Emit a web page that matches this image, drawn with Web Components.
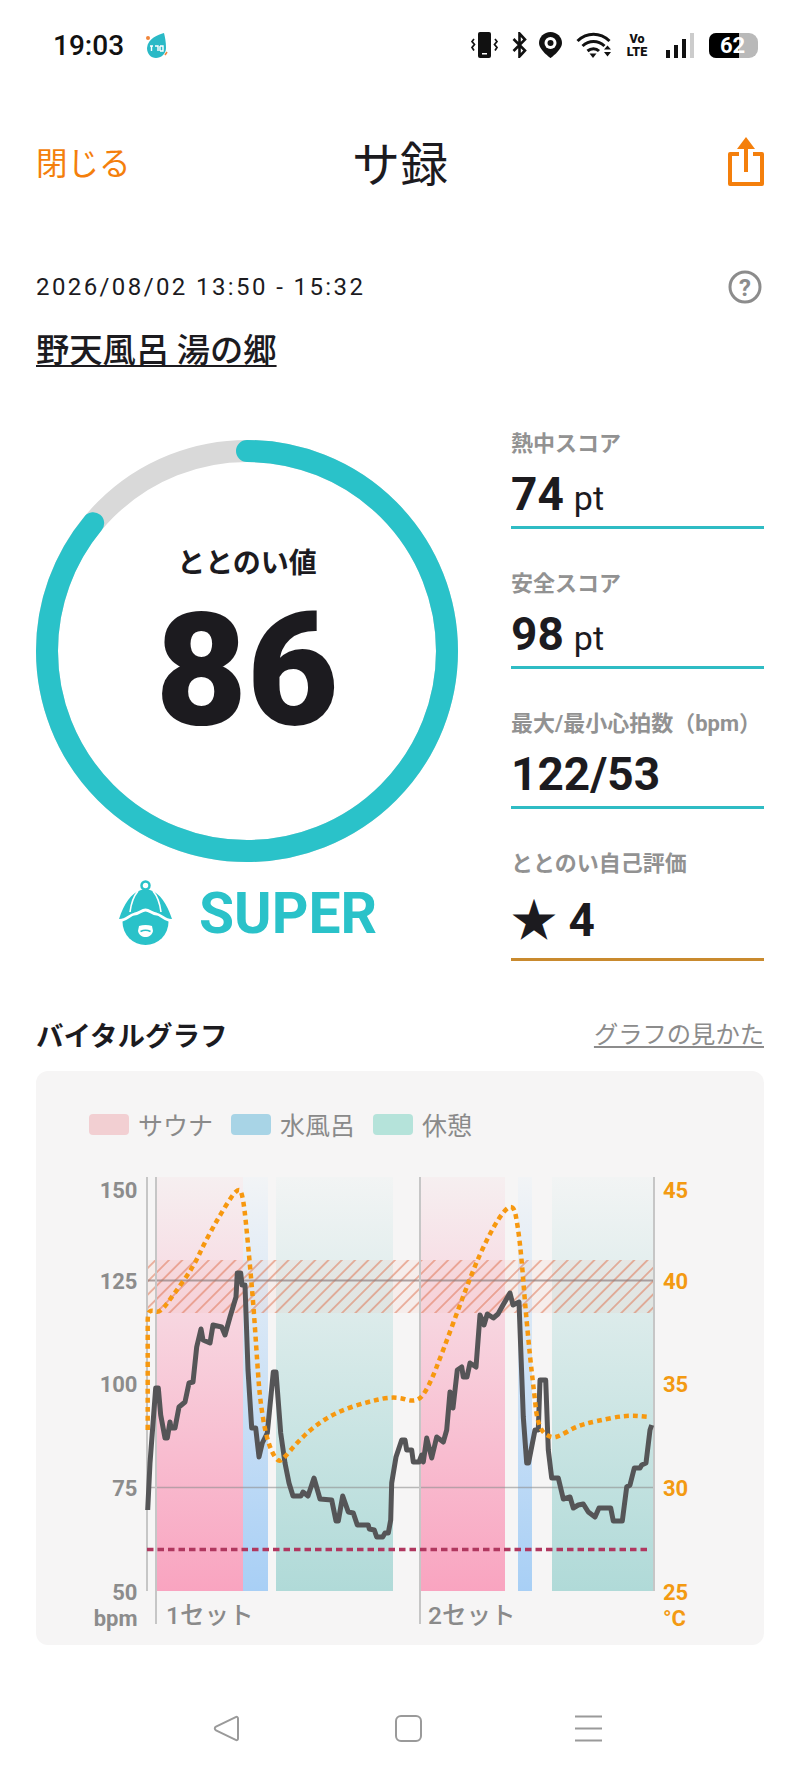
<!DOCTYPE html>
<html lang="ja">
<head>
<meta charset="utf-8">
<title>サ録</title>
<style>
  html, body { margin: 0; background: #fff; }
  body { font-family: Roboto, "Noto Sans CJK JP", sans-serif; color: #1c1b1f; }
</style>
</head>
<body>
<sk-status-bar time="19:03" battery="62"></sk-status-bar>
<sk-page-header close="閉じる" title="サ録"></sk-page-header>
<sk-session-info date="2026/08/02 13:50 - 15:32" venue="野天風呂 湯の郷"></sk-session-info>
<sk-score-panel>
  <sk-score-ring slot="ring" label="ととのい値" score="86" rank="SUPER"></sk-score-ring>
  <sk-stat label="熱中スコア" unit="pt">74</sk-stat>
  <sk-stat label="安全スコア" unit="pt">98</sk-stat>
  <sk-stat label="最大/最小心拍数（bpm）">122/53</sk-stat>
  <sk-stat label="ととのい自己評価" tone="amber">★ 4</sk-stat>
</sk-score-panel>
<sk-section-title link="グラフの見かた">バイタルグラフ</sk-section-title>
<sk-vital-chart></sk-vital-chart>
<sk-nav-bar></sk-nav-bar>

<script>
/* Top system bar: clock, app notification icon, status icons */
class SkStatusBar extends HTMLElement {
  constructor() { super(); this.attachShadow({ mode: 'open' }); }
  connectedCallback() {
    this.shadowRoot.innerHTML = `
      <style>
        :host { display: flex; align-items: center; height: 90px; padding: 0 42px 0 53px; box-sizing: border-box; color: #111; }
        .time { font: 500 28px Roboto, sans-serif; }
        .app { margin-left: 20px; }
        .icons { margin-left: auto; display: flex; align-items: center; }
        svg { display: block; }
        .volte { width: 24px; margin: 0 17px 0 12px; font: 900 12.500px/13px Roboto, sans-serif; text-align: center; }
        .battery { position: relative; width: 49px; height: 25px; margin-left: 15px; border-radius: 7px 9px 9px 7px; overflow: hidden; background: #b9b9b9; }
        .battery i { display: block; width: 30px; height: 100%; background: #000; }
        .battery span { position: absolute; left: 11px; top: 0; font: 700 22px/25px Roboto, sans-serif; color: #fff; }
      </style>
      <span class="time">${this.getAttribute('time')}</span>
      <svg class="app" width="25" height="27" viewBox="0 0 25 27">
        <path d="M20 1C14 3 4 6 3 16c0 6 4 10 9 10s10-4 10-10C22 10 21 5 20 1Z" fill="#2ab9c6"/>
        <circle cx="4" cy="6" r="2" fill="#f0853a"/>
        <path d="M6 14h3M7.500 14v5M11 14h3v5M16 14v5M16 14h3v5h-3" stroke="#fff" stroke-width="1.400" fill="none"/>
        <path d="M21 23l2-3" stroke="#f0853a" stroke-width="1.500"/>
      </svg>
      <div class="icons">
        <svg width="27" height="26" viewBox="0 0 27 26">
          <rect x="7" y="0" width="13" height="26" rx="2" fill="#111"/>
          <rect x="11" y="21" width="5" height="1.500" fill="#fff"/>
          <path d="M3 7l-2 2.500 2.500 3-2.500 3 2 3M24 7l2 2.500-2.500 3 2.500 3-2 3" stroke="#111" stroke-width="1.700" fill="none"/>
        </svg>
        <svg style="margin-left:14px" width="15" height="26" viewBox="0 0 15 26">
          <path d="M1.500 7L13 18.500 7.500 24.500V1.500L13 7.500 1.500 19" stroke="#111" stroke-width="2.600" fill="none"/>
        </svg>
        <svg style="margin-left:12px" width="23" height="26" viewBox="0 0 23 26">
          <path d="M11.500 0C5 0 0 5 0 11c0 7 11.500 15 11.500 15S23 18 23 11C23 5 18 0 11.500 0Z" fill="#111"/>
          <circle cx="11.500" cy="11" r="6" fill="#fff"/><circle cx="11.500" cy="11" r="3" fill="#111"/>
        </svg>
        <svg style="margin-left:14px" width="37" height="26" viewBox="0 0 37 26">
          <path d="M1.500 9C11 0 24 0 33.500 9M6.500 14C13 8 22 8 28.500 14" stroke="#111" stroke-width="3" fill="none"/>
          <path d="M11.500 19C15 16 20 16 23 19" stroke="#111" stroke-width="3" fill="none"/>
          <path d="M13.500 21.500h7L17 26Z" fill="#111"/>
          <path d="M28 17.500h7l-3.500-4ZM28 20h7l-3.500 4.500Z" fill="#111"/>
        </svg>
        <div class="volte">Vo<br>LTE</div>
        <svg width="28" height="25" viewBox="0 0 28 25">
          <rect x="0" y="17" width="4" height="8" fill="#111"/>
          <rect x="8" y="12" width="4" height="13" fill="#111"/>
          <rect x="16" y="6" width="4" height="19" fill="#111"/>
          <rect x="24" y="0" width="4" height="25" fill="#ccc"/>
        </svg>
        <div class="battery"><i></i><span>${this.getAttribute('battery')}</span></div>
      </div>
    `;
  }
}

class SkPageHeader extends HTMLElement {
  constructor() { super(); this.attachShadow({ mode: 'open' }); }
  connectedCallback() {
    this.shadowRoot.innerHTML = `
      <style>
        :host { display: grid; grid-template-columns: 1fr auto 1fr; align-items: center; box-sizing: border-box; height: 146px; padding: 0 36px 5px; }
        .close { font: 400 31.500px "Noto Sans CJK JP", sans-serif; color: #f47f0c; }
        h1 { margin: 0; font: 400 48px "Noto Sans CJK JP", sans-serif; color: #1c1b1f; }
        svg { justify-self: end; display: block; }
      </style>
      <span class="close">${this.getAttribute('close')}</span>
      <h1>${this.getAttribute('title')}</h1>
      <svg width="36" height="50" viewBox="0 0 36 50">
        <path d="M11 18H2V48H34V18H25" stroke="#f47f0c" stroke-width="4" fill="none" stroke-linejoin="round"/>
        <path d="M18 36V8" stroke="#f47f0c" stroke-width="4"/>
        <path d="M9 13L18 1l9 12Z" fill="#f47f0c"/>
      </svg>
    `;
  }
}

class SkSessionInfo extends HTMLElement {
  constructor() { super(); this.attachShadow({ mode: 'open' }); }
  connectedCallback() {
    this.shadowRoot.innerHTML = `
      <style>
        :host { display: block; padding: 34px 36px 0; }
        .row { display: flex; justify-content: space-between; align-items: center; height: 34px; }
        .date { font: 400 24px/34px Roboto, sans-serif; letter-spacing: 2.400px; color: #1c1b1f; }
        svg { display: block; margin-right: 2px; }
        text { font: 700 24px Roboto, sans-serif; fill: #8c8c8c; }
        .venue { display: block; margin-top: 24px; height: 43px; font: 500 33.300px/40px "Noto Sans CJK JP", sans-serif; color: #1c1b1f; text-decoration: underline; text-underline-offset: 3px; text-decoration-thickness: 2px; white-space: pre; }
      </style>
      <div class="row">
        <span class="date">${this.getAttribute('date')}</span>
        <svg width="34" height="34" viewBox="0 0 34 34">
          <circle cx="17" cy="17" r="15" fill="none" stroke="#8c8c8c" stroke-width="3"/>
          <text x="17" y="25.500" text-anchor="middle">?</text>
        </svg>
      </div>
      <span class="venue">${this.getAttribute('venue')}</span>
    `;
  }
}

/* Two columns: ring on the left, stat rows on the right */
class SkScorePanel extends HTMLElement {
  constructor() { super(); this.attachShadow({ mode: 'open' }); }
  connectedCallback() {
    this.shadowRoot.innerHTML = `
      <style>
        :host { display: flex; justify-content: space-between; align-items: flex-start; margin-top: 58px; padding: 0 36px; }
        .ring { display: block; margin-top: 11px; }
        .stats { display: flex; flex-direction: column; gap: 40px; width: 253px; }
      </style>
      <div class="ring"><slot name="ring"></slot></div>
      <div class="stats"><slot></slot></div>
    `;
  }
}

class SkScoreRing extends HTMLElement {
  constructor() { super(); this.attachShadow({ mode: 'open' }); }
  connectedCallback() {
    const score = Number(this.getAttribute('score'));
    const r = 200;
    const c = 2 * Math.PI * r;
    this.shadowRoot.innerHTML = `
      <style>
        :host { display: block; width: 422px; }
        .stack { display: grid; width: 422px; height: 422px; }
        .stack > * { grid-area: 1 / 1; }
        .inner { display: flex; flex-direction: column; align-items: center; }
        .label { margin-top: 103px; height: 36px; font: 700 28px/36px "Noto Sans CJK JP", sans-serif; color: #1c1b1f; }
        .score { margin-top: 16px; height: 150px; font: 900 158px/150px Roboto, sans-serif; color: #1c1b1f; }
        .rank { display: flex; justify-content: center; align-items: center; gap: 25px; height: 65px; margin-top: 18px; }
        .rank span { padding-top: 2px; font: 700 57px/65px Roboto, sans-serif; color: #2ac2c9; }
      </style>
      <div class="stack">
        <svg width="422" height="422" viewBox="0 0 422 422">
          <circle cx="211" cy="211" r="${r}" fill="none" stroke="#d9d9d9" stroke-width="22"/>
          <circle cx="211" cy="211" r="${r}" fill="none" stroke="#2ac2c9" stroke-width="22" stroke-linecap="round"
            stroke-dasharray="${c * score / 100} ${c}" transform="rotate(-90 211 211)"/>
        </svg>
        <div class="inner">
          <div class="label">${this.getAttribute('label')}</div>
          <div class="score">${score}</div>
        </div>
      </div>
      <div class="rank">
        <svg width="57" height="65" viewBox="0 0 57 65">
          <circle cx="28.500" cy="5.500" r="4" fill="none" stroke="#2ac2c9" stroke-width="2.500"/>
          <circle cx="28.500" cy="42" r="23" fill="#2ac2c9"/>
          <path d="M2 39C7 24 14 13 24 10c3-1 6-1 9 0 10 3 17 14 22 29-8 0-12-5-17-6-4 0-6-3-9.500-3S23 33 19 33c-5 1-9 6-17 6Z" fill="#2ac2c9"/>
          <path d="M.500 41c8 0 12-6 17-7 4 0 7-4 11-4s7 4 11 4c5 1 9 7 17 7" fill="none" stroke="#fff" stroke-width="2.800"/>
          <path d="M21 11C16 17 14 24 13 32M36 11C41 17 43 24 44 32" fill="none" stroke="#fff" stroke-width="1.600"/>
          <path d="M22 46c4-1.500 9-1.500 13 0l1 5c-1 4-4 6-7.500 6S22 55 21 51Z" fill="#fff"/>
          <path d="M23.500 51.500c3-1.500 7-1.500 10 0" fill="none" stroke="#2ac2c9" stroke-width="1.600"/>
        </svg>
        <span>${this.getAttribute('rank')}</span>
      </div>
    `;
  }
}

class SkStat extends HTMLElement {
  constructor() { super(); this.attachShadow({ mode: 'open' }); }
  connectedCallback() {
    const amber = this.getAttribute('tone') === 'amber';
    const unit = this.getAttribute('unit');
    this.shadowRoot.innerHTML = `
      <style>
        :host { display: block; border-bottom: 3px solid ${amber ? '#c98a2e' : '#2fbcc4'}; }
        .label { height: 28px; padding-top: 1px; box-sizing: border-box; font: 700 22px/28px Roboto, "Noto Sans CJK JP", sans-serif; color: #929292; white-space: nowrap; }
        .value { height: ${amber ? '71px' : '69px'}; margin-top: ${amber ? '10px' : '0'}; padding-top: ${amber ? '0' : '4px'}; box-sizing: border-box; font: 700 46px/66px Roboto, "Noto Sans CJK JP", sans-serif; color: #1c1b1f; }
        .unit { margin-left: 10px; font-size: 34px; font-weight: 400; }
      </style>
      <div class="label">${this.getAttribute('label')}</div>
      <div class="value"><slot></slot>${unit ? `<span class="unit">${unit}</span>` : ''}</div>
    `;
  }
}

class SkSectionTitle extends HTMLElement {
  constructor() { super(); this.attachShadow({ mode: 'open' }); }
  connectedCallback() {
    this.shadowRoot.innerHTML = `
      <style>
        :host { display: flex; justify-content: space-between; align-items: center; height: 40px; margin-top: 53px; padding: 0 36px; }
        h2 { margin: 0; font: 700 27.500px "Noto Sans CJK JP", sans-serif; color: #1c1b1f; }
        a { margin-bottom: 4px; font: 400 24.300px "Noto Sans CJK JP", sans-serif; color: #8c8c8c; text-decoration: underline; text-underline-offset: 3px; }
      </style>
      <h2><slot></slot></h2>
      <a>${this.getAttribute('link')}</a>
    `;
  }
}

const HEART = [[147.7,1510],[150,1463],[155.7,1388],[158.3,1388],[160.7,1415],[165,1438],[167.3,1438],[170,1422],[171,1428],[175,1428],[179,1407],[185,1402],[189,1383],[193,1382],[196.7,1347],[201,1329],[203,1340],[210,1343],[213,1325],[221.7,1327],[225,1335],[230,1317],[236,1297],[237.3,1273],[240.7,1273],[242,1285],[245,1285],[248,1370],[251.7,1428],[255.7,1428],[259,1457],[262.3,1443],[267.3,1433],[273.3,1372],[276,1372],[280.7,1433],[285,1463],[289,1483],[293,1496],[301,1496],[303,1492],[308,1496],[314,1478],[320,1499],[331.7,1500],[336,1521],[338.3,1521],[342.7,1496],[348.3,1512],[353.3,1513],[357.3,1525],[368.3,1525],[369.3,1529],[374.3,1530],[376.7,1537],[382.7,1537],[385,1533],[388.3,1533],[390.7,1520],[391.7,1483],[396,1457],[401.7,1440],[405,1440],[406.7,1450],[411.7,1450],[413.3,1462],[419,1462],[421.7,1455],[423.3,1462],[426.7,1438],[431.7,1458],[436.7,1437],[443.3,1442],[446.7,1430],[450,1392],[453,1408],[457.3,1370],[461.7,1367],[463.3,1377],[467,1377],[470,1363],[476,1367],[480,1315],[484,1325],[487.3,1314],[493.3,1318],[498,1314],[503,1305],[510,1293],[513,1305],[519,1302],[523.3,1417],[526.7,1463],[528.500,1463],[535,1430],[538.3,1430],[540,1380],[545.7,1380],[548.3,1450],[551.7,1478],[558.3,1478],[563.3,1499],[570,1497],[573.3,1508],[578.3,1505],[583.3,1504],[588.3,1512],[595,1517],[599,1508],[610.7,1508],[613.3,1521],[622.3,1521],[626.7,1487],[630,1485],[634.3,1468],[640,1468],[641.7,1465],[646,1463],[650,1430],[651.7,1425]];
const TEMP = [[147.7,1430],[147.7,1330],[147.7,1313],[151.7,1310],[160,1313],[173.3,1295],[193.3,1267],[205,1242],[220,1215],[238.3,1186],[243.3,1197],[248.3,1247],[253.3,1303],[257.3,1363],[260,1400],[266.7,1440],[277.3,1463],[285,1457],[296.7,1443],[313.3,1427],[336.7,1412],[366.7,1402],[395,1396],[416.7,1403],[428.3,1388],[443.3,1350],[461.7,1300],[480,1253],[500,1215],[513.3,1203],[518,1227],[521.7,1260],[525,1303],[530,1357],[535,1400],[536.7,1417],[541.7,1432],[551.7,1438],[560,1436],[576.7,1426],[596.7,1421],[626.7,1415],[650,1417]];

function linePath(points) {
  return 'M' + points.map(p => p.join(' ')).join('L');
}

function smoothPath(points) {
  let d = `M${points[0][0]} ${points[0][1]}`;
  for (let i = 1; i < points.length - 1; i++) {
    const mx = (points[i][0] + points[i + 1][0]) / 2;
    const my = (points[i][1] + points[i + 1][1]) / 2;
    d += `Q${points[i][0]} ${points[i][1]} ${mx} ${my}`;
  }
  const last = points[points.length - 1];
  return d + `L${last[0]} ${last[1]}`;
}

class SkVitalChart extends HTMLElement {
  constructor() { super(); this.attachShadow({ mode: 'open' }); }
  connectedCallback() {
    const band = (x, w, fill) => `<rect x="${x}" y="1177" width="${w}" height="414" fill="url(#${fill})"/>`;
    const grad = (id, top, bottom) => `
      <linearGradient id="${id}" x1="0" y1="0" x2="0" y2="1">
        <stop offset="0" stop-color="${top}"/><stop offset="1" stop-color="${bottom}"/>
      </linearGradient>`;
    const left = [[150, 1198], [125, 1289], [100, 1392], [75, 1496], [50, 1600]];
    const right = [[45, 1198], [40, 1289], [35, 1392], [30, 1496], [25, 1600]];
    this.shadowRoot.innerHTML = `
      <style>
        :host { display: block; box-sizing: border-box; height: 574px; margin: 17px 36px 0; padding-top: 42px; background: #f6f5f5; border-radius: 12px; }
        .legend { display: flex; align-items: center; height: 22px; padding-left: 53px; font: 400 25px/22px "Noto Sans CJK JP", sans-serif; color: #8a8a8a; }
        .legend i { display: block; width: 40px; height: 21px; margin-right: 9px; border-radius: 4px; }
        .legend span { margin-right: 18px; }
        svg { display: block; margin-top: 34px; }
        text { font: 700 22px Roboto, sans-serif; fill: #8c8c8c; }
        text.temp { fill: #f39a12; }
        text.set { font: 500 24.500px Roboto, "Noto Sans CJK JP", sans-serif; fill: #8a8a8a; }
      </style>
      <div class="legend">
        <i style="background:#f2cfd2"></i><span>サウナ</span>
        <i style="background:#a8d4e6"></i><span>水風呂</span>
        <i style="background:#b5e3da"></i><span>休憩</span>
      </div>
      <svg width="728" height="476" viewBox="36 1169 728 476">
        <defs>
          ${grad('sauna', '#f6eff0', '#f9a4c0')}
          ${grad('water', '#f2f4f6', '#a8cff5')}
          ${grad('rest', '#f2f4f4', '#b0dad8')}
          <pattern id="hatch" patternUnits="userSpaceOnUse" width="9.400" height="9.400" patternTransform="rotate(45)">
            <line x1="4.700" y1="0" x2="4.700" y2="9.400" stroke="#dc6a45" stroke-width="1.200" stroke-opacity=".75"/>
          </pattern>
        </defs>
        ${band(156, 87, 'sauna')}${band(243, 25, 'water')}${band(276, 117, 'rest')}
        ${band(420, 85, 'sauna')}${band(518, 14, 'water')}${band(552, 102, 'rest')}
        <rect x="147" y="1260" width="507" height="53" fill="#f4a890" fill-opacity=".1"/>
        <rect x="147" y="1260" width="507" height="53" fill="url(#hatch)"/>
        <path d="M147 1280.500H654" stroke="#8f7f7f" stroke-opacity=".7" stroke-width="2"/>
        <path d="M147 1487.500H654" stroke="#8f8f8f" stroke-opacity=".6" stroke-width="1.500"/>
        <path d="M147 1177V1591M654 1177V1591" stroke="#c6c6c6" stroke-width="2"/>
        <path d="M156 1177V1624M420 1177V1624" stroke="#c6c6c6" stroke-width="2"/>
        <path d="M147 1549.500H651" stroke="#b0375f" stroke-width="3.500" stroke-dasharray="6.500 4"/>
        <path d="${linePath(HEART)}" fill="none" stroke="#555557" stroke-width="5" stroke-linejoin="round"/>
        <path d="${smoothPath(TEMP)}" fill="none" stroke="#f7980f" stroke-width="4.500" stroke-dasharray="5 4"/>
        ${left.map(([v, y]) => `<text x="137.500" y="${y}" text-anchor="end">${v}</text>`).join('')}
        <text x="137.500" y="1626" text-anchor="end">bpm</text>
        ${right.map(([v, y]) => `<text class="temp" x="663" y="${y}">${v}</text>`).join('')}
        <text class="temp" x="663" y="1626">°C</text>
        <text class="set" x="166" y="1624">1セット</text>
        <text class="set" x="428" y="1624">2セット</text>
      </svg>
    `;
  }
}

class SkNavBar extends HTMLElement {
  constructor() { super(); this.attachShadow({ mode: 'open' }); }
  connectedCallback() {
    this.shadowRoot.innerHTML = `
      <style>
        :host { display: flex; justify-content: center; align-items: center; gap: 155px; height: 100px; margin-top: 33px; padding-left: 14px; box-sizing: border-box; }
        svg { display: block; fill: none; stroke: #9a9a9a; stroke-width: 2; }
        svg:last-child { margin-left: -2px; }
      </style>
      <svg width="27" height="27" viewBox="0 0 27 27"><path d="M25 3.500v20c0 1.500-1 2-2.300 1.400L3 15.300c-1.600-.8-1.600-2.800 0-3.600L22.700 2.100C24 1.500 25 2 25 3.500Z"/></svg>
      <svg width="27" height="27" viewBox="0 0 27 27"><rect x="1" y="1" width="25" height="25" rx="5"/></svg>
      <svg width="27" height="27" viewBox="0 0 27 27"><path d="M0 1.500H27M0 13.500H27M0 25.500H27"/></svg>
    `;
  }
}

customElements.define('sk-status-bar', SkStatusBar);
customElements.define('sk-page-header', SkPageHeader);
customElements.define('sk-session-info', SkSessionInfo);
customElements.define('sk-score-panel', SkScorePanel);
customElements.define('sk-score-ring', SkScoreRing);
customElements.define('sk-stat', SkStat);
customElements.define('sk-section-title', SkSectionTitle);
customElements.define('sk-vital-chart', SkVitalChart);
customElements.define('sk-nav-bar', SkNavBar);
</script>
</body>
</html>
